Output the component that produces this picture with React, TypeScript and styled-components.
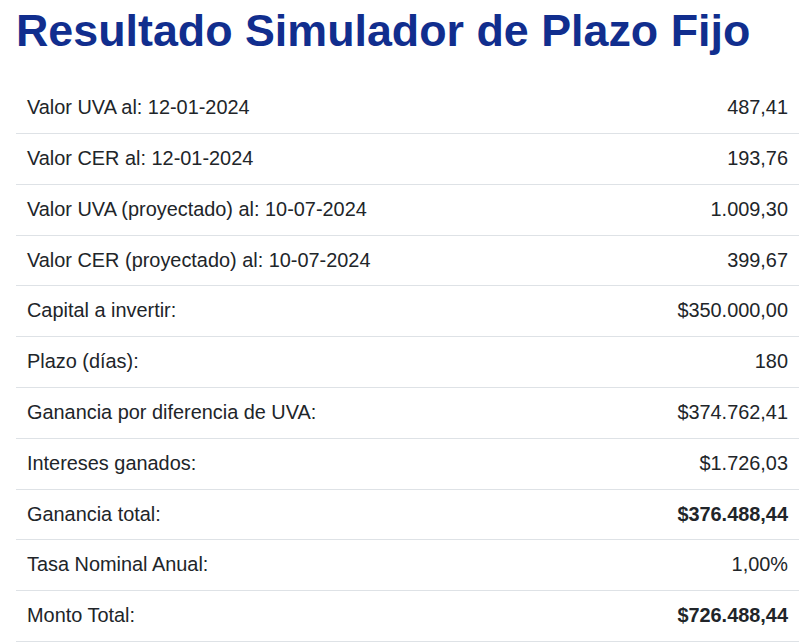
import React from "react";
import styled, { createGlobalStyle } from "styled-components";

const rows = [
  { label: "Valor UVA al: 12-01-2024", value: "487,41" },
  { label: "Valor CER al: 12-01-2024", value: "193,76" },
  { label: "Valor UVA (proyectado) al: 10-07-2024", value: "1.009,30" },
  { label: "Valor CER (proyectado) al: 10-07-2024", value: "399,67" },
  { label: "Capital a invertir:", value: "$350.000,00" },
  { label: "Plazo (días):", value: "180" },
  { label: "Ganancia por diferencia de UVA:", value: "$374.762,41" },
  { label: "Intereses ganados:", value: "$1.726,03" },
  { label: "Ganancia total:", value: "$376.488,44", strong: true },
  { label: "Tasa Nominal Anual:", value: "1,00%" },
  { label: "Monto Total:", value: "$726.488,44", strong: true },
];

export default function App() {
  return (
    <Page>
      <GlobalStyle />
      <Title>Resultado Simulador de Plazo Fijo</Title>
      <Table>
        <tbody>
          {rows.map((row) => (
            <Row key={row.label}>
              <Label>{row.label}</Label>
              <Value $strong={row.strong}>{row.value}</Value>
            </Row>
          ))}
        </tbody>
      </Table>
    </Page>
  );
}

const GlobalStyle = createGlobalStyle`
  body {
    margin: 0;
    background: #fff;
    font-family: "Liberation Sans", Arial, sans-serif;
    color: #212529;
  }
`;

const Page = styled.div`
  padding: 4px 1px 0 16px;
`;

const Title = styled.h1`
  margin: 0 0 25.5px;
  font-size: 44.8px;
  line-height: 1.2;
  font-weight: 700;
  color: #112e8e;
`;

const Table = styled.table`
  width: 100%;
  border-collapse: collapse;
  font-size: 19.9px;
  line-height: 29.8px;
`;

const Row = styled.tr`
  border-bottom: 1px solid #dee2e6;
`;

const Label = styled.td`
  padding: 10px 11px;
  text-align: left;
`;

const Value = styled.td<{ $strong?: boolean }>`
  padding: 10px 11px;
  text-align: right;
  font-weight: ${(p) => (p.$strong ? 700 : 400)};
`;
